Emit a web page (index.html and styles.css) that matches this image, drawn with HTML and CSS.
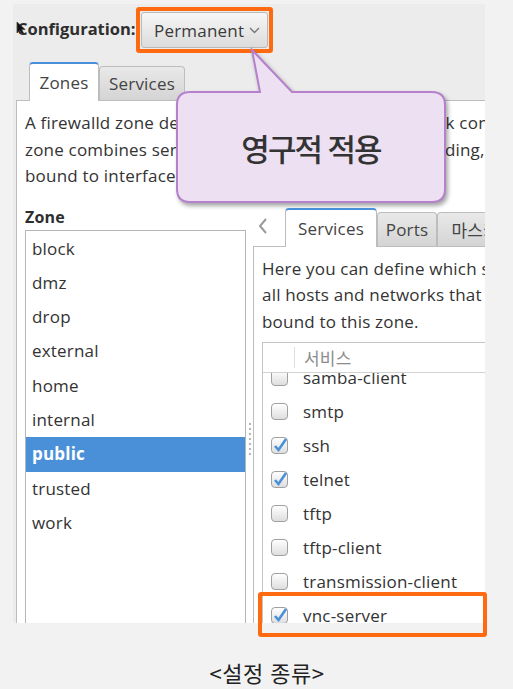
FILE: index.html
```html
<!DOCTYPE html>
<html lang="ko">
<head>
  <meta charset="UTF-8">
  <title>firewall-config 설정 종류</title>
  <link rel="stylesheet" href="styles.css">
</head>
<body>
<div class="page">

  <div class="shot">
    <div class="config">
      <span class="config-label">Configuration:</span>
      <span class="hl">
        <span class="combo">Permanent
          <svg class="chev" width="11" height="7" viewBox="0 0 11 7"><polyline points="1,1 5.5,5.5 10,1" fill="none" stroke="#777" stroke-width="1.4"/></svg>
        </span>
      </span>
    </div>

    <div class="notebook">
      <div class="tabs">
        <div class="tab active zones-tab">Zones</div>
        <div class="tab services-tab">Services</div>
      </div>
      <div class="panel main-panel">
        <p class="desc">A firewalld zone defines the level of trust for network connections, interfaces and source addresses bound to the zone. The<br>zone combines services, ports, protocols, masquerading, port/packet forwarding, icmp filters and rich rules. The zone can be<br>bound to interfaces and source addresses.</p>

        <div class="split">
          <div class="zone-col">
            <div class="zone-title">Zone</div>
            <ul class="zone-list">
              <li>block</li>
              <li>dmz</li>
              <li>drop</li>
              <li>external</li>
              <li>home</li>
              <li>internal</li>
              <li class="selected">public</li>
              <li>trusted</li>
              <li>work</li>
            </ul>
          </div>

          <div class="grip"></div>

          <div class="sub-notebook">
            <div class="tabs sub-tabs">
              <span class="scroll-arrow">
                <svg width="10" height="16" viewBox="0 0 10 16"><polyline points="8,1 2,8 8,15" fill="none" stroke="#9a9a9a" stroke-width="2"/></svg>
              </span>
              <div class="tab active svc-tab">Services</div>
              <div class="tab ports-tab">Ports</div>
              <div class="tab masq-tab">마스커레이딩</div>
            </div>
            <div class="panel sub-panel">
              <p class="desc">Here you can define which services are trusted in the zone. Trusted services are accessible from<br>all hosts and networks that can reach the machine from connections, interfaces and sources<br>bound to this zone.</p>
              <div class="tree">
                <div class="tree-head"><span class="head-sep"></span><span class="head-title">서비스</span></div>
                <div class="tree-body">
                  <ul class="rows">
                    <li><span class="check"></span>samba-client</li>
                    <li><span class="check"></span>smtp</li>
                    <li><span class="check on"><svg width="16" height="16" viewBox="0 0 16 16"><polyline points="3,8 6.5,12 14,1" fill="none" stroke="#4a90d9" stroke-width="2.6"/></svg></span>ssh</li>
                    <li><span class="check on"><svg width="16" height="16" viewBox="0 0 16 16"><polyline points="3,8 6.5,12 14,1" fill="none" stroke="#4a90d9" stroke-width="2.6"/></svg></span>telnet</li>
                    <li><span class="check"></span>tftp</li>
                    <li><span class="check"></span>tftp-client</li>
                    <li><span class="check"></span>transmission-client</li>
                    <li><span class="check on"><svg width="16" height="16" viewBox="0 0 16 16"><polyline points="3,8 6.5,12 14,1" fill="none" stroke="#4a90d9" stroke-width="2.6"/></svg></span>vnc-server</li>
                    <li><span class="check"></span>wbem-https</li>
                  </ul>
                </div>
              </div>
            </div>
          </div>
        </div>
      </div>
    </div>
  </div>

  <div class="caption">&lt;설정 종류&gt;</div>

  <!-- annotations drawn over the screenshot -->
  <div class="callout">
    <svg class="bubble" width="285" height="165" viewBox="0 0 285 165">
      <path d="M20 47 L90 47 L82 5 L122 47 L262 47 Q275 47 275 60 L275 144 Q275 157 262 157 L20 157 Q7 157 7 144 L7 60 Q7 47 20 47 Z" fill="#ede0f2" stroke="#b580cc" stroke-width="2"/>
    </svg>
    <span class="callout-text">영구적 적용</span>
  </div>
  <div class="vnc-mark"></div>
  <svg class="cursor" width="10" height="14" viewBox="0 0 10 14"><path d="M1 1 L1 12 L3.8 9.4 L5.8 13 L7.6 12.2 L5.7 8.6 L9.2 8.6 Z" fill="#111" stroke="#444" stroke-width="0.8"/></svg>
</div>
</body>
</html>
```

FILE: styles.css
```css
* {
  box-sizing: border-box;
}
body {
  margin: 0;
  background: #f2f2f2;
  font-family: "Open Sans", "Noto Sans CJK KR", sans-serif;
  font-size: 17px;
  letter-spacing: 0.2px;
  color: #333;
}

.page {
  position: relative;
  width: 513px;
  height: 689px;
  padding: 4px 0 0 13px;
}
.shot {
  width: 472px;
  height: 619px;
  background: #ececec;
  overflow: hidden;
}

/* top bar */
.config {
  display: flex;
  align-items: center;
  height: 52px;
  margin-bottom: 6px;
  padding-left: 4px;
}
.config-label {
  width: 119px;
  margin-top: -4px;
  font-size: 16.5px;
  font-weight: bold;
  letter-spacing: 0;
  white-space: nowrap;
  color: #2e2e2e;
}
.hl {
  display: flex;
  padding: 1px;
  border: 4px solid #ff6a10;
  border-radius: 3px;
}
.combo {
  display: flex;
  align-items: center;
  justify-content: space-between;
  width: 127px;
  height: 36px;
  padding: 0 7px 0 12px;
  background: linear-gradient(#f6f6f6, #dcdcdc);
  border: 1px solid #b9b9b9;
  border-radius: 3px;
  color: #3a3a3a;
}

/* notebooks */
.notebook {
  width: 560px;
  margin-left: 3px;
}
.tabs {
  display: flex;
  align-items: flex-end;
  padding-left: 13px;
}
.tab {
  display: flex;
  align-items: center;
  justify-content: center;
  height: 34px;
  border: 1px solid #bdbdbd;
  border-bottom: none;
  border-radius: 4px 4px 0 0;
  background: linear-gradient(#e9e9e9, #d4d4d4);
  color: #444;
  white-space: nowrap;
}
.tab.active {
  position: relative;
  z-index: 1;
  height: 39px;
  margin-bottom: -1px;
  background: #fff;
  border-top: 2px solid #4a90d9;
}
.zones-tab { width: 70px; }
.services-tab { width: 86px; }

.panel {
  background: #fff;
  border: 1px solid #bdbdbd;
}
.main-panel {
  height: 560px;
  padding: 9px 0 0 8px;
}
.desc {
  margin: 0;
  line-height: 26.5px;
  white-space: nowrap;
}

.split {
  display: flex;
  margin-top: 17px;
}
.zone-col {
  flex: none;
  width: 221px;
}
.zone-title {
  font-size: 16px;
  font-weight: bold;
  line-height: 20px;
  color: #2e2e2e;
}
.zone-list {
  list-style: none;
  height: 420px;
  margin: 3px 0 0;
  padding: 1px 0 0;
  background: #fff;
  border: 1px solid #b5b5b5;
}
.zone-list li {
  height: 34.3px;
  line-height: 34.3px;
  padding-left: 6px;
}
.zone-list li.selected {
  background: #4a90d9;
  color: #fff;
  font-weight: bold;
}

.grip {
  flex: none;
  width: 7px;
}
.grip::before {
  content: "";
  display: block;
  width: 2px;
  height: 32px;
  margin: 216px auto 0;
  background: repeating-linear-gradient(#b4b4b4 0 2px, transparent 2px 5px);
}

.sub-notebook {
  flex: 1;
  padding-top: 1px;
}
.sub-tabs {
  padding-left: 0;
}
.scroll-arrow {
  display: flex;
  align-items: center;
  align-self: flex-start;
  width: 32px;
  height: 36px;
  padding-left: 5px;
}
.svc-tab { width: 92px; }
.ports-tab { width: 60px; }
.masq-tab { width: 124px; }

.sub-panel {
  height: 400px;
  padding: 9px 0 0 8px;
}
.tree {
  margin-top: 6.5px;
  border: 1px solid #c4c4c4;
}
.tree-head {
  display: flex;
  align-items: center;
  height: 30px;
  border-bottom: 1px solid #d2d2d2;
  color: #8c8c8c;
}
.head-sep {
  align-self: stretch;
  width: 32px;
  margin: 4px 0;
  border-right: 1px solid #dedede;
}
.head-title {
  padding-left: 9px;
}
.tree-body {
  height: 300px;
  overflow: hidden;
}
.rows {
  list-style: none;
  margin: -12px 0 0;
  padding: 0;
}
.rows li {
  display: flex;
  align-items: center;
  gap: 15px;
  height: 34px;
  padding-left: 8px;
}
.check {
  flex: none;
  display: flex;
  width: 17px;
  height: 17px;
  border: 1px solid #a0a0a0;
  border-radius: 4px;
  background: linear-gradient(#fff, #dedede);
}
.check svg {
  overflow: visible;
}

/* caption under the picture */
.caption {
  margin-top: 34px;
  padding-left: 8px;
  text-align: center;
  font-family: "Noto Sans CJK KR", sans-serif;
  font-size: 22px;
  line-height: 30px;
  letter-spacing: 0.5px;
  color: #222;
}

/* annotations */
.callout {
  position: absolute;
  left: 170px;
  top: 45px;
  width: 285px;
  height: 165px;
  display: flex;
  align-items: center;
  justify-content: center;
  padding: 47px 10px 8px 7px;
}
.bubble {
  position: absolute;
  left: 0;
  top: 0;
  filter: drop-shadow(2px 3px 2px rgba(0, 0, 0, 0.35));
}
.callout-text {
  position: relative;
  font-family: "Noto Sans CJK KR", sans-serif;
  font-size: 31px;
  font-weight: 500;
  letter-spacing: -2px;
  color: #333;
}
.vnc-mark {
  position: absolute;
  left: 258px;
  top: 592px;
  width: 229px;
  height: 45px;
  border: 4px solid #ff6a10;
  border-radius: 3px;
}
.cursor {
  position: absolute;
  left: 16px;
  top: 21px;
}
```
